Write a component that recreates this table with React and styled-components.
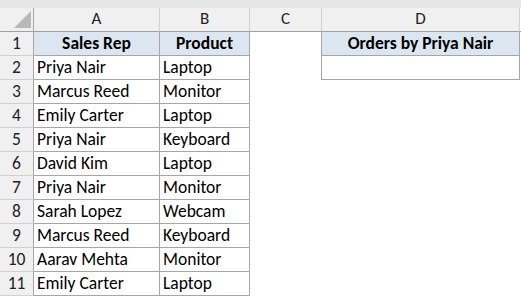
import React from 'react';
import styled, { createGlobalStyle } from 'styled-components';

const GlobalStyle = createGlobalStyle`
  html, body {
    margin: 0;
    padding: 0;
    background: #ffffff;
  }
  body {
    font-family: Calibri, Carlito, "Liberation Sans", Arial, sans-serif;
  }
`;

const TABLE_LINE = '#a6a6a6';
const HEAD_LINE = '#d0d0d0';

const Sheet = styled.div`
  display: grid;
  grid-template-columns: 34px 126px 90px 72px 198px 1fr;
  grid-template-rows: 8px;
  grid-auto-rows: 24px;
  width: 521px;
  background: #ffffff;
`;

const TopBar = styled.div`
  grid-column: 1 / -1;
  background: #e6e6e6;
`;

const Corner = styled.div`
  box-sizing: border-box;
  display: flex;
  align-items: flex-end;
  justify-content: flex-end;
  padding: 0 2px 3px 0;
  background: #f0f0f0;
  border-right: 1px solid ${TABLE_LINE};
  border-bottom: 1px solid #9f9f9f;
`;

const ColHead = styled.div`
  box-sizing: border-box;
  display: flex;
  align-items: center;
  justify-content: center;
  padding-bottom: 2px;
  background: ${(p) => (p.$blank ? '#ffffff' : '#f0f0f0')};
  border-right: ${(p) => (p.$blank ? 'none' : `1px solid ${HEAD_LINE}`)};
  border-bottom: 1px solid #9f9f9f;
  font-size: 17px;
  color: #222222;
`;

const RowHead = styled.div`
  box-sizing: border-box;
  display: flex;
  align-items: center;
  justify-content: center;
  padding-bottom: 2px;
  background: #f0f0f0;
  border-right: 1px solid ${TABLE_LINE};
  border-bottom: 1px solid ${HEAD_LINE};
  font-size: 17.5px;
  color: #222222;
`;

const Cell = styled.div`
  box-sizing: border-box;
  display: flex;
  align-items: center;
  justify-content: ${(p) => (p.$head ? 'center' : 'flex-start')};
  padding: 0 3px 2px 3px;
  white-space: nowrap;
  overflow: hidden;
  font-size: 17.5px;
  font-weight: ${(p) => (p.$head ? 700 : 400)};
  color: #000000;
  background: ${(p) => (p.$head ? '#dce6f1' : '#ffffff')};
  border-right: ${(p) => (p.$right ? `1px solid ${TABLE_LINE}` : 'none')};
  border-bottom: ${(p) => (p.$bottom ? `1px solid ${TABLE_LINE}` : 'none')};
`;

const Filler = styled.div`
  background: #ffffff;
`;

const rows = [
  ['Priya Nair', 'Laptop'],
  ['Marcus Reed', 'Monitor'],
  ['Emily Carter', 'Laptop'],
  ['Priya Nair', 'Keyboard'],
  ['David Kim', 'Laptop'],
  ['Priya Nair', 'Monitor'],
  ['Sarah Lopez', 'Webcam'],
  ['Marcus Reed', 'Keyboard'],
  ['Aarav Mehta', 'Monitor'],
  ['Emily Carter', 'Laptop'],
];

function CornerMark() {
  return (
    <svg width="17" height="17" viewBox="0 0 17 17">
      <polygon points="17,0 17,17 0,17" fill="#b8b8b8" />
    </svg>
  );
}

export default function App() {
  const body = [['Sales Rep', 'Product'], ...rows];

  return (
    <>
      <GlobalStyle />
      <Sheet>
        <TopBar />

        <Corner>
          <CornerMark />
        </Corner>
        {['A', 'B', 'C', 'D'].map((c) => (
          <ColHead key={c}>{c}</ColHead>
        ))}
        <ColHead $blank />

        {body.map(([rep, product], i) => {
          const n = i + 1;
          const head = i === 0;
          const inD = n <= 2;
          return (
            <React.Fragment key={n}>
              <RowHead>{n}</RowHead>
              <Cell $head={head} $right $bottom>{rep}</Cell>
              <Cell $head={head} $right $bottom>{product}</Cell>
              <Cell $right={inD} />
              <Cell $head={head} $right={inD} $bottom={inD}>
                {head ? 'Orders by Priya Nair' : ''}
              </Cell>
              <Filler />
            </React.Fragment>
          );
        })}
      </Sheet>
    </>
  );
}
